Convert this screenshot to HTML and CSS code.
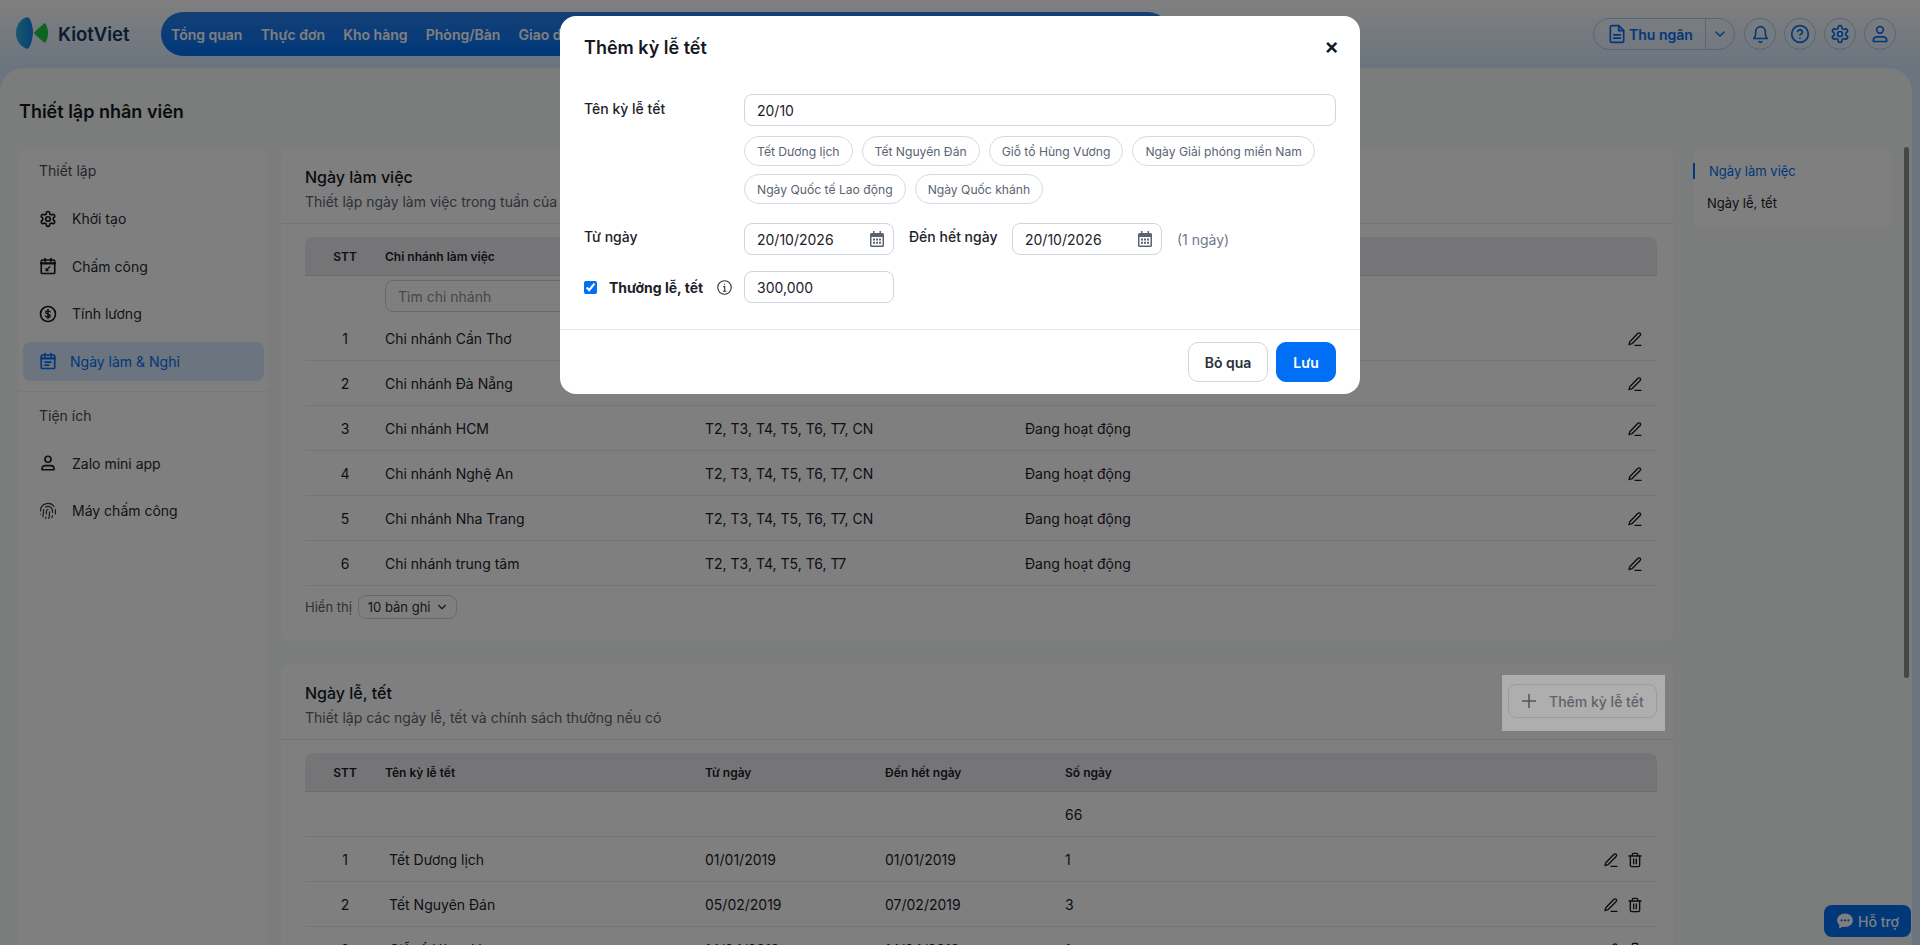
FILE: index.html
```html
<!DOCTYPE html>
<html lang="vi">
<head>
    <meta charset="UTF-8">
    <title>Thiết lập nhân viên</title>
    <link rel="stylesheet" href="styles.css">
</head>
<body>

    <svg class="defs" aria-hidden="true">
        <symbol id="i-gear" viewBox="0 0 24 24"><path d="M12.22 2h-.44a2 2 0 0 0-2 2v.18a2 2 0 0 1-1 1.73l-.43.25a2 2 0 0 1-2 0l-.15-.08a2 2 0 0 0-2.73.73l-.22.38a2 2 0 0 0 .73 2.73l.15.1a2 2 0 0 1 1 1.72v.51a2 2 0 0 1-1 1.74l-.15.09a2 2 0 0 0-.73 2.73l.22.38a2 2 0 0 0 2.73.73l.15-.08a2 2 0 0 1 2 0l.43.25a2 2 0 0 1 1 1.73V20a2 2 0 0 0 2 2h.44a2 2 0 0 0 2-2v-.18a2 2 0 0 1 1-1.73l.43-.25a2 2 0 0 1 2 0l.15.08a2 2 0 0 0 2.73-.73l.22-.39a2 2 0 0 0-.73-2.73l-.15-.08a2 2 0 0 1-1-1.74v-.5a2 2 0 0 1 1-1.74l.15-.09a2 2 0 0 0 .73-2.73l-.22-.38a2 2 0 0 0-2.73-.73l-.15.08a2 2 0 0 1-2 0l-.43-.25a2 2 0 0 1-1-1.73V4a2 2 0 0 0-2-2z"/><circle cx="12" cy="12" r="3"/></symbol>
        <symbol id="i-timesheet" viewBox="0 0 24 24"><path d="M8 2v4M16 2v4"/><rect x="3" y="4" width="18" height="18" rx="1.5"/><path d="M3 8.500h18" stroke-width="3"/><path d="M10 17.500l4.500-4.500M9.500 18v-2.500l2.500 2.500z" stroke-width="1.800"/></symbol>
        <symbol id="i-dollar" viewBox="0 0 24 24"><circle cx="12" cy="12" r="10"/><path d="M15 9.300c-.5-1-1.600-1.500-3-1.500-1.800 0-3 .9-3 2.100 0 2.800 6 1.500 6 4.300 0 1.200-1.300 2-3 2-1.500 0-2.600-.5-3.100-1.500M12 6v12" stroke-width="1.800"/></symbol>
        <symbol id="i-calendar" viewBox="0 0 24 24"><path d="M8 2v4M16 2v4"/><rect x="3" y="4" width="18" height="18" rx="1.5"/><path d="M3 8.500h18" stroke-width="3"/><path d="M8 13.500h8M8 17.500h5"/></symbol>
        <symbol id="i-user" viewBox="0 0 24 24"><circle cx="12" cy="7" r="4"/><path d="M4 21v-1.500a4 4 0 0 1 4-4h8a4 4 0 0 1 4 4V21z"/></symbol>
        <symbol id="i-finger" viewBox="0 0 24 24"><path d="M12 10a2 2 0 0 0-2 2c0 1.020-.1 2.510-.26 4M14 13.120c0 2.380 0 6.380-1 8.880M17.290 21.020c.12-.6.430-2.300.5-3.020M2 12a10 10 0 0 1 18-6M2 16h.01M21.800 16c.2-2 .131-5.354 0-6M5 19.500C5.500 18 6 15 6 12a6 6 0 0 1 .34-2M8.650 22c.21-.66.450-1.320.570-2M9 6.800a6 6 0 0 1 9 5.200v2"/></symbol>
        <symbol id="i-pen" viewBox="0 0 24 24"><path d="M12 21.500h9"/><path d="M16.400 3.400a2.300 2.300 0 0 1 3.300 3.300L7.500 19 3 20.500 4.200 16z"/></symbol>
        <symbol id="i-trash" viewBox="0 0 24 24"><path d="M3 6h18M8 6V3.500A1.500 1.500 0 0 1 9.500 2h5A1.500 1.500 0 0 1 16 3.500V6"/><path d="M5 6v14a2 2 0 0 0 2 2h10a2 2 0 0 0 2-2V6"/><path d="M10 10.500v7M14 10.500v7"/></symbol>
        <symbol id="i-chevron" viewBox="0 0 24 24"><path d="M6 9l6 6 6-6"/></symbol>
        <symbol id="i-date" viewBox="0 0 14 16"><path d="M3 0h1.500v2h5V0H11v2h1.500A1.500 1.500 0 0 1 14 3.500v11a1.500 1.500 0 0 1-1.500 1.500h-11A1.500 1.500 0 0 1 0 14.500v-11A1.500 1.500 0 0 1 1.500 2H3zM1.500 6v8.500h11V6zM3 7.500h2v2H3zM6 7.500h2v2H6zM9 7.500h2v2H9zM3 10.800h2v2H3zM6 10.800h2v2H6zM9 10.800h2v2H9z" fill-rule="evenodd"/></symbol>
    </svg>

    <header class="topbar">
        <div class="logo">
            <svg class="logo-mark" viewBox="0 0 32 32" width="32" height="32">
                <defs>
                    <linearGradient id="logo-blue" x1="0" x2="1" y1="0" y2="0">
                        <stop offset="0" stop-color="#2fb0d6"/>
                        <stop offset="1" stop-color="#1080e8"/>
                    </linearGradient>
                </defs>
                <path d="M11 .3C5 1.500 0 8 0 16c0 8 5 14.500 11 15.700 2.500.5 5-6 6-15.700C17 8 14-.3 11 .3z" fill="url(#logo-blue)"/>
                <path d="M28 6.500C30 5 32 11 32 16s-2 11-4 9.500L19 17.500c-1-.8-1-2.200 0-3z" fill="#1cc846"/>
            </svg>
            <span class="logo-text">KiotViet</span>
        </div>
        <nav class="mainnav">
            <a>Tổng quan</a>
            <a>Thực đơn</a>
            <a>Kho hàng</a>
            <a>Phòng/Bàn</a>
            <a>Giao dịch</a>
        </nav>
        <div class="top-actions">
            <div class="cashier">
                <span class="cashier-main">
                    <svg class="ico-blue" width="20" height="20" viewBox="0 0 24 24"><path d="M14 2H6a2 2 0 0 0-2 2v16a2 2 0 0 0 2 2h12a2 2 0 0 0 2-2V8z"/><path d="M14 2v6h6M8 13h8M8 17h8"/></svg>
                    Thu ngân
                </span>
                <span class="cashier-more"><svg class="ico-blue" width="16" height="16"><use href="#i-chevron"/></svg></span>
            </div>
            <button class="round-btn"><svg class="ico-blue" width="19" height="19" viewBox="0 0 24 24"><path d="M6 8a6 6 0 0 1 12 0c0 7 2.500 9 2.500 9h-17S6 15 6 8z"/><path d="M10.300 21a2 2 0 0 0 3.400 0"/></svg></button>
            <button class="round-btn"><svg class="ico-blue" width="20" height="20" viewBox="0 0 24 24"><circle cx="12" cy="12" r="10"/><path d="M9.100 9a3 3 0 0 1 5.800 1c0 2-3 3-3 3M12 17h.01"/></svg></button>
            <button class="round-btn"><svg class="ico-blue" width="20" height="20"><use href="#i-gear"/></svg></button>
            <button class="round-btn"><svg class="ico-blue" width="20" height="20"><use href="#i-user"/></svg></button>
        </div>
    </header>

    <main class="panel">
        <h1 class="page-title">Thiết lập nhân viên</h1>

        <div class="columns">
            <aside class="sidebar">
                <div class="side-title">Thiết lập</div>
                <div class="side-list">
                    <a class="side-item"><svg class="ico"><use href="#i-gear"/></svg>Khởi tạo</a>
                    <a class="side-item"><svg class="ico"><use href="#i-timesheet"/></svg>Chấm công</a>
                    <a class="side-item"><svg class="ico"><use href="#i-dollar"/></svg>Tính lương</a>
                    <a class="side-item active"><svg class="ico"><use href="#i-calendar"/></svg>Ngày làm &amp; Nghỉ</a>
                </div>
                <div class="side-sep"></div>
                <div class="side-title">Tiện ích</div>
                <div class="side-list">
                    <a class="side-item"><svg class="ico"><use href="#i-user"/></svg>Zalo mini app</a>
                    <a class="side-item"><svg class="ico thin"><use href="#i-finger"/></svg>Máy chấm công</a>
                </div>
            </aside>

            <div class="content">
                <section class="card">
                    <div class="card-head">
                        <div>
                            <h2>Ngày làm việc</h2>
                            <p>Thiết lập ngày làm việc trong tuần của chi nhánh</p>
                        </div>
                    </div>
                    <div class="card-body">
                        <table class="grid grid-work">
                            <thead>
                                <tr><th class="stt">STT</th><th>Chi nhánh làm việc</th><th>Ngày làm việc</th><th>Trạng thái</th><th></th></tr>
                            </thead>
                            <tbody>
                                <tr class="filter"><td></td><td><input class="search" placeholder="Tìm chi nhánh"></td><td></td><td></td><td></td></tr>
                                <tr><td class="stt">1</td><td>Chi nhánh Cần Thơ</td><td>T2, T3, T4, T5, T6, T7, CN</td><td>Đang hoạt động</td><td class="acts"><svg class="ico-sm"><use href="#i-pen"/></svg></td></tr>
                                <tr><td class="stt">2</td><td>Chi nhánh Đà Nẵng</td><td>T2, T3, T4, T5, T6, T7, CN</td><td>Đang hoạt động</td><td class="acts"><svg class="ico-sm"><use href="#i-pen"/></svg></td></tr>
                                <tr><td class="stt">3</td><td>Chi nhánh HCM</td><td>T2, T3, T4, T5, T6, T7, CN</td><td>Đang hoạt động</td><td class="acts"><svg class="ico-sm"><use href="#i-pen"/></svg></td></tr>
                                <tr><td class="stt">4</td><td>Chi nhánh Nghệ An</td><td>T2, T3, T4, T5, T6, T7, CN</td><td>Đang hoạt động</td><td class="acts"><svg class="ico-sm"><use href="#i-pen"/></svg></td></tr>
                                <tr><td class="stt">5</td><td>Chi nhánh Nha Trang</td><td>T2, T3, T4, T5, T6, T7, CN</td><td>Đang hoạt động</td><td class="acts"><svg class="ico-sm"><use href="#i-pen"/></svg></td></tr>
                                <tr><td class="stt">6</td><td>Chi nhánh trung tâm</td><td>T2, T3, T4, T5, T6, T7</td><td>Đang hoạt động</td><td class="acts"><svg class="ico-sm"><use href="#i-pen"/></svg></td></tr>
                            </tbody>
                        </table>
                        <div class="pager">
                            <span>Hiển thị</span>
                            <span class="pager-select">10 bản ghi <svg class="ico-xs"><use href="#i-chevron"/></svg></span>
                        </div>
                    </div>
                </section>

                <section class="card">
                    <div class="card-head">
                        <div>
                            <h2>Ngày lễ, tết</h2>
                            <p>Thiết lập các ngày lễ, tết và chính sách thưởng nếu có</p>
                        </div>
                        <div class="spotlight">
                            <button class="add-btn"><svg class="plus" viewBox="0 0 14 14"><path d="M7 0v14M0 7h14"/></svg>Thêm kỳ lễ tết</button>
                        </div>
                    </div>
                    <div class="card-body">
                        <table class="grid grid-holiday">
                            <thead>
                                <tr><th class="stt">STT</th><th>Tên kỳ lễ tết</th><th>Từ ngày</th><th>Đến hết ngày</th><th>Số ngày</th><th></th></tr>
                            </thead>
                            <tbody>
                                <tr><td></td><td></td><td></td><td></td><td>66</td><td></td></tr>
                                <tr><td class="stt">1</td><td class="name">Tết Dương lịch</td><td>01/01/2019</td><td>01/01/2019</td><td>1</td><td class="acts"><svg class="ico-sm"><use href="#i-pen"/></svg><svg class="ico-sm"><use href="#i-trash"/></svg></td></tr>
                                <tr><td class="stt">2</td><td class="name">Tết Nguyên Đán</td><td>05/02/2019</td><td>07/02/2019</td><td>3</td><td class="acts"><svg class="ico-sm"><use href="#i-pen"/></svg><svg class="ico-sm"><use href="#i-trash"/></svg></td></tr>
                                <tr><td class="stt">3</td><td class="name">Giỗ tổ Hùng Vương</td><td>14/04/2019</td><td>14/04/2019</td><td>1</td><td class="acts"><svg class="ico-sm"><use href="#i-pen"/></svg><svg class="ico-sm"><use href="#i-trash"/></svg></td></tr>
                            </tbody>
                        </table>
                    </div>
                </section>
            </div>

            <aside class="toc">
                <a class="toc-item current">Ngày làm việc</a>
                <a class="toc-item">Ngày lễ, tết</a>
            </aside>
        </div>
        <div class="scroll-thumb"></div>
    </main>

    <a class="support">
        <svg width="18" height="18" viewBox="0 0 24 24" class="support-ico"><path d="M12 2C6 2 1.500 6 1.500 11c0 2.500 1.100 4.700 3 6.300L4 22l5-2.400c1 .2 2 .4 3 .4 6 0 10.500-4 10.500-9S18 2 12 2z"/><circle cx="7.500" cy="11" r="1.500" fill="#0070f4"/><circle cx="12" cy="11" r="1.500" fill="#0070f4"/><circle cx="16.500" cy="11" r="1.500" fill="#0070f4"/></svg>
        Hỗ trợ
    </a>

    <div class="backdrop"></div>

    <div class="modal">
        <div class="modal-head">
            <h3>Thêm kỳ lễ tết</h3>
            <button class="close">×</button>
        </div>
        <div class="modal-body">
            <div class="form-row top">
                <label class="form-label">Tên kỳ lễ tết</label>
                <div>
                    <div class="field full">20/10</div>
                    <div class="chips">
                        <span class="chip">Tết Dương lịch</span>
                        <span class="chip">Tết Nguyên Đán</span>
                        <span class="chip">Giỗ tổ Hùng Vương</span>
                        <span class="chip">Ngày Giải phóng miền Nam</span>
                        <span class="chip">Ngày Quốc tế Lao động</span>
                        <span class="chip">Ngày Quốc khánh</span>
                    </div>
                </div>
            </div>
            <div class="form-row">
                <label class="form-label raised">Từ ngày</label>
                <div class="inline">
                    <div class="field date">20/10/2026<svg class="date-ico"><use href="#i-date"/></svg></div>
                    <label class="form-label raised to">Đến hết ngày</label>
                    <div class="field date">20/10/2026<svg class="date-ico"><use href="#i-date"/></svg></div>
                    <span class="days">(1 ngày)</span>
                </div>
            </div>
            <div class="form-row">
                <div class="bonus">
                    <input type="checkbox" checked>
                    <b>Thưởng lễ, tết</b>
                    <svg width="15" height="15" viewBox="0 0 14 14" class="info"><circle cx="7" cy="7" r="6.300"/><path d="M5.800 6.200H7.200V10.500M5.500 10.500h3.200M7 3.500v1"/></svg>
                </div>
                <div class="field date">300,000</div>
            </div>
        </div>
        <div class="modal-foot">
            <button class="btn btn-skip">Bỏ qua</button>
            <button class="btn btn-save">Lưu</button>
        </div>
    </div>

</body>
</html>
```

FILE: styles.css
```css
* {
    box-sizing: border-box;
}
html, body {
    height: 100%;
}
body {
    margin: 0;
    overflow: hidden;
    font-family: Inter, "Noto Sans", sans-serif;
    font-size: 14px;
    color: #1d2129;
    background: linear-gradient(180deg, #ffffff 0, #d6e9ff 70px);
}
h1, h2, h3, p {
    margin: 0;
}
button {
    font-family: inherit;
}
.defs {
    display: none;
}

/* thanh tren */
.topbar {
    height: 68px;
    padding: 12px 24px 12px 16px;
    display: flex;
    align-items: flex-start;
}
.logo {
    width: 145px;
    height: 44px;
    display: flex;
    align-items: center;
    gap: 10px;
}
.logo-mark {
    margin-top: -2px;
}
.logo-text {
    font-size: 18.500px;
    font-weight: 600;
    color: #14365f;
}
.mainnav {
    width: 1009px;
    height: 44px;
    padding: 0 10px;
    display: flex;
    align-items: center;
    gap: 18.200px;
    border-radius: 22px;
    background: linear-gradient(180deg, #2a80ee, #0070f4);
    overflow: hidden;
}
.mainnav a {
    font-size: 14px;
    font-weight: 600;
    color: #ffffff;
    white-space: nowrap;
}
.top-actions {
    margin-left: auto;
    padding-top: 6px;
    display: flex;
    gap: 8px;
}
.cashier {
    width: 142px;
    height: 32px;
    margin-right: 1px;
    display: flex;
    border: 1px solid #a6cdfb;
    border-radius: 16px;
    background: rgba(255, 255, 255, 0.12);
}
.cashier-main {
    width: 112px;
    padding-left: 13px;
    display: flex;
    align-items: center;
    gap: 2px;
    font-weight: 600;
    color: #0070f4;
    border-right: 1px solid #a6cdfb;
}
.cashier-more {
    flex: 1;
    display: flex;
    align-items: center;
    justify-content: center;
}
.round-btn {
    width: 32px;
    height: 32px;
    padding: 0;
    display: flex;
    align-items: center;
    justify-content: center;
    border: 1px solid #a6cdfb;
    border-radius: 50%;
    background: rgba(255, 255, 255, 0.12);
}
.ico-blue {
    fill: none;
    stroke: #0070f4;
    stroke-width: 2;
    stroke-linecap: round;
    stroke-linejoin: round;
}

/* khung chinh */
.panel {
    position: relative;
    width: 1912px;
    height: 877px;
    padding: 31px 20px 0 19px;
    overflow: hidden;
    background: #f7f8f8;
    border-radius: 24px 24px 0 0;
}
.page-title {
    height: 26px;
    margin: 0 0 23px;
    font-size: 18px;
    line-height: 26px;
    font-weight: 600;
    color: #15181d;
}
.columns {
    display: grid;
    grid-template-columns: 249px 1392px 199px;
    column-gap: 13px;
    align-items: start;
}
.toc {
    margin-left: 7px;
    width: 199px;
    height: 80px;
    padding-top: 7px;
    background: #ffffff;
    border-radius: 8px;
}
.toc-item {
    display: flex;
    align-items: center;
    height: 32px;
    padding-left: 14px;
    font-size: 13px;
    color: #1d2129;
}
.toc-item.current {
    height: 16px;
    margin: 8px 0;
    border-left: 2px solid #0070f4;
    color: #0070f4;
}
.scroll-thumb {
    position: absolute;
    top: 79px;
    right: 3px;
    width: 5px;
    height: 531px;
    background: #8c8c8c;
    border-radius: 3px;
}

/* menu trai */
.sidebar {
    height: 800px;
    padding-top: 13px;
    background: #ffffff;
    border-radius: 8px 8px 0 0;
}
.side-title {
    height: 20px;
    padding-left: 20px;
    margin-bottom: 18px;
    line-height: 20px;
    color: #454c58;
}
.side-list {
    padding: 0 4px;
    display: flex;
    flex-direction: column;
    gap: 8.500px;
}
.side-item {
    height: 39px;
    padding-left: 16px;
    display: flex;
    align-items: center;
    gap: 15px;
    border-radius: 8px;
    color: #252a33;
}
.side-item.active {
    padding-left: 16px;
    gap: 13px;
    background: #d6e8ff;
    color: #0070f4;
}
.side-sep {
    height: 1px;
    margin: 10px 0 14px;
    background: #f0f1f3;
}
.ico {
    width: 18px;
    height: 18px;
    flex-shrink: 0;
    fill: none;
    stroke: #15181d;
    stroke-width: 2.200;
    stroke-linecap: round;
    stroke-linejoin: round;
}
.ico.thin {
    stroke-width: 1.600;
    stroke: #2f343c;
}
.active .ico {
    stroke: #0070f4;
}

/* the noi dung */
.content {
    display: flex;
    flex-direction: column;
    gap: 23px;
}
.card {
    background: #ffffff;
    border-radius: 8px;
}
.card-head {
    height: 76px;
    padding: 19px 16px 0 24px;
    display: flex;
    justify-content: space-between;
    border-bottom: 1px solid #e8e9ec;
}
.card h2 {
    height: 20px;
    font-size: 16px;
    font-weight: 500;
    line-height: 20px;
    color: #15181d;
}
.card p {
    margin-top: 5px;
    line-height: 20px;
    color: #5b6370;
}
.card-body {
    padding: 13px 16px 22px 24px;
}
.spotlight {
    position: relative;
    z-index: 11;
    width: 163px;
    height: 56px;
    margin: -8px -8px 0 0;
    padding: 9px 8px 0 6px;
    background: #aeaeae;
}
.add-btn {
    width: 149px;
    height: 34px;
    padding: 0 0 0 13px;
    display: flex;
    align-items: center;
    font-size: 14px;
    font-weight: 500;
    color: #5f6269;
    background: #aeaeae;
    border: 1px solid #9c9c9c;
    border-radius: 8px;
}
.plus {
    width: 14px;
    height: 14px;
    margin-right: 13px;
    fill: none;
    stroke: #555555;
    stroke-width: 1.500;
}

/* bang */
.grid {
    width: 100%;
    border-collapse: separate;
    border-spacing: 0;
    table-layout: fixed;
}
.grid th {
    height: 39px;
    padding: 0;
    text-align: left;
    font-size: 12px;
    font-weight: 600;
    color: #1d2129;
    background: #eaebee;
    border-bottom: 1px solid #d7d9dd;
}
.grid th:first-child {
    border-top-left-radius: 8px;
}
.grid th:last-child {
    border-top-right-radius: 8px;
}
.grid td {
    height: 45px;
    padding: 0;
    border-bottom: 1px solid #e8e9ec;
    color: #1d2129;
}
.grid .stt {
    width: 80px;
    text-align: center;
}
.grid-work .filter td {
    height: 40px;
    border-bottom: 0;
}
.grid-work th:nth-child(2),
.grid-work th:nth-child(3) {
    width: 320px;
}
.grid-work th:nth-child(4) {
    width: 320px;
}
.grid-holiday th:nth-child(2) {
    width: 320px;
}
.grid-holiday th:nth-child(3),
.grid-holiday th:nth-child(4) {
    width: 180px;
}
.grid-holiday th:nth-child(5) {
    width: 180px;
}
.grid .name {
    padding-left: 4px;
}
.search {
    width: 240px;
    height: 32px;
    padding: 0 12px;
    display: block;
    font-family: inherit;
    font-size: 14px;
    border: 1px solid #d0d3d8;
    border-radius: 8px;
    background: #ffffff;
}
.search::placeholder {
    color: #8b9099;
}
.grid .acts {
    padding-right: 14px;
    text-align: right;
}
.ico-sm {
    width: 16px;
    height: 16px;
    margin-left: 8px;
    vertical-align: middle;
    fill: none;
    stroke: #15181d;
    stroke-width: 2;
    stroke-linecap: round;
    stroke-linejoin: round;
}
.pager {
    margin-top: 9px;
    display: flex;
    align-items: center;
    gap: 6px;
    font-size: 13px;
    color: #5b6370;
}
.pager-select {
    width: 99px;
    height: 24px;
    padding: 0 7px 0 9px;
    display: flex;
    align-items: center;
    justify-content: space-between;
    color: #2a2f38;
    border: 1px solid #d0d3d8;
    border-radius: 8px;
}
.ico-xs {
    width: 14px;
    height: 14px;
    fill: none;
    stroke: #2a2f38;
    stroke-width: 2;
    stroke-linecap: round;
    stroke-linejoin: round;
}

/* nut ho tro */
.support {
    position: fixed;
    left: 1824px;
    top: 905px;
    width: 87px;
    height: 32px;
    display: flex;
    align-items: center;
    justify-content: center;
    gap: 4px;
    font-size: 14px;
    font-weight: 500;
    color: #ffffff;
    background: #0070f4;
    border-radius: 8px;
    z-index: 5;
}
.support-ico {
    fill: #ffffff;
}

/* phu toi va hop thoai */
.backdrop {
    position: fixed;
    inset: 0;
    z-index: 10;
    background: rgba(0, 0, 0, 0.5);
}
.modal {
    position: fixed;
    left: 560px;
    top: 16px;
    width: 800px;
    height: 378px;
    z-index: 20;
    background: #ffffff;
    border-radius: 16px;
}
.modal-head {
    height: 62px;
    padding: 0 24px;
    display: flex;
    align-items: center;
    justify-content: space-between;
}
.modal-head h3 {
    font-size: 18px;
    font-weight: 600;
    color: #15181d;
}
.close {
    margin: -3px -3px 0 0;
    padding: 0;
    border: 0;
    background: none;
    font-size: 22px;
    font-weight: 600;
    line-height: 24px;
    color: #15181d;
}
.modal-body {
    height: 252px;
    padding: 16px 24px 0;
    border-bottom: 1px solid #e8e9ec;
}
.form-row {
    margin-bottom: 16px;
    display: grid;
    grid-template-columns: 160px 1fr;
    align-items: center;
}
.form-row.top {
    margin-bottom: 19px;
    align-items: start;
}
.form-row.top .form-label {
    padding-top: 6px;
    display: block;
}
.form-label {
    font-weight: 500;
    color: #1d2129;
}
.form-label.raised {
    padding-bottom: 5px;
}
.field {
    height: 32px;
    padding-left: 12px;
    display: flex;
    align-items: center;
    justify-content: space-between;
    font-size: 14px;
    color: #1d2129;
    background: #ffffff;
    border: 1px solid #d0d5dd;
    border-radius: 8px;
}
.field.full {
    width: 592px;
}
.field.date {
    width: 150px;
    padding-right: 9px;
}
.date-ico {
    width: 14px;
    height: 16px;
    fill: #5b6370;
}
.chips {
    margin-top: 10px;
    display: flex;
    flex-wrap: wrap;
    gap: 8px 9px;
}
.chip {
    height: 30px;
    padding: 0 12px;
    display: flex;
    align-items: center;
    font-size: 12.150px;
    color: #5b6472;
    border: 1px solid #d7dae0;
    border-radius: 15px;
}
.inline {
    display: flex;
    align-items: center;
}
.to {
    width: 118px;
    padding-left: 15px;
}
.days {
    margin-left: 15px;
    color: #6f7a8c;
}
.bonus {
    display: flex;
    align-items: center;
}
.bonus input {
    width: 13px;
    height: 13px;
    margin: 0 12px 0 0;
    accent-color: #006ff5;
}
.bonus b {
    font-weight: 700;
    white-space: nowrap;
}
.info {
    margin-left: 14px;
    fill: none;
    stroke: #2a2f38;
    stroke-width: 1;
}
.modal-foot {
    height: 64px;
    padding: 12px 24px 0;
    display: flex;
    justify-content: flex-end;
    gap: 8px;
}
.btn {
    height: 40px;
    font-size: 14px;
    font-weight: 600;
    border-radius: 10px;
    border: 1px solid #d0d5dd;
}
.btn-skip {
    width: 80px;
    background: #ffffff;
    color: #2a2f38;
}
.btn-save {
    width: 60px;
    background: #006ff5;
    border-color: #006ff5;
    color: #ffffff;
}
```
